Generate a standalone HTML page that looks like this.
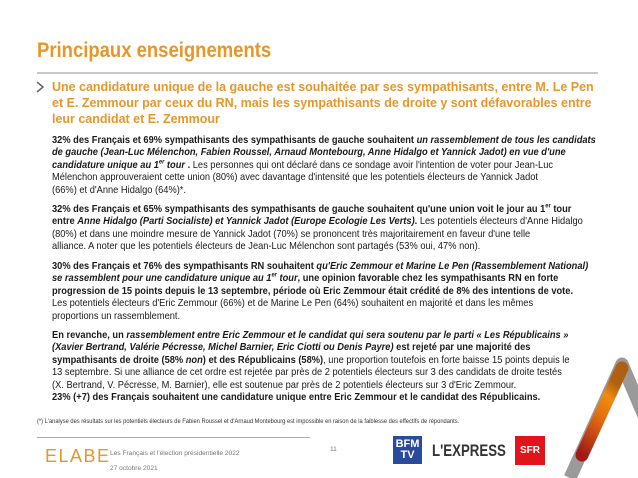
<!DOCTYPE html>
<html><head><meta charset="utf-8"><style>
body{margin:0;width:638px;height:478px;background:#fff;position:relative;overflow:hidden;font-family:"Liberation Sans",sans-serif}
.abs{position:absolute;white-space:nowrap}
.sq{transform-origin:0 0}
.title{left:37px;top:39px;font-size:21px;font-weight:bold;color:#E8962A;transform:scaleX(0.88)}
.rule{left:37px;top:72px;width:561px;height:2px;background:#c8c8c8}
.head{left:52px;top:79px;font-size:13px;line-height:16px;font-weight:bold;color:#E8962A;transform:scaleX(0.96)}
.body{left:52px;font-size:10.5px;line-height:12.4px;color:#1a1a1a;transform:scaleX(0.885)}
sup{font-size:6.5px;line-height:0}
</style></head><body>
<div class="abs sq title">Principaux enseignements</div>
<div class="abs rule"></div>
<svg class="abs" style="left:34px;top:80px" width="12" height="14"><path d="M3 2 L9 7 L3 12" fill="none" stroke="#666" stroke-width="1.5"/></svg>
<div class="abs sq head">Une candidature unique de la gauche est souhaitée par ses sympathisants, entre M. Le Pen<br>et E. Zemmour par ceux du RN, mais les sympathisants de droite y sont défavorables entre<br>leur candidat et E. Zemmour</div>

<div class="abs sq body" style="top:134px"><b>32% des Français et 69% sympathisants des sympathisants de gauche souhaitent <i>un rassemblement de tous les candidats</i></b><br><b><i>de gauche (Jean-Luc Mélenchon, Fabien Roussel, Arnaud Montebourg, Anne Hidalgo et Yannick Jadot) en vue d'une</i></b><br><b><i>candidature unique au 1<sup>er</sup> tour</i> .</b> Les personnes qui ont déclaré dans ce sondage avoir l'intention de voter pour Jean-Luc<br>Mélenchon approuveraient cette union (80%) avec davantage d'intensité que les potentiels électeurs de Yannick Jadot<br>(66%) et d'Anne Hidalgo (64%)*.</div>

<div class="abs sq body" style="top:203px"><b>32% des Français et 65% sympathisants des sympathisants de gauche souhaitent qu'une union voit le jour au 1<sup>er</sup> tour</b><br><b>entre <i>Anne Hidalgo (Parti Socialiste) et Yannick Jadot (Europe Ecologie Les Verts)</i>.</b> Les potentiels électeurs d'Anne Hidalgo<br>(80%) et dans une moindre mesure de Yannick Jadot (70%) se prononcent très majoritairement en faveur d'une telle<br>alliance. A noter que les potentiels électeurs de Jean-Luc Mélenchon sont partagés (53% oui, 47% non).</div>

<div class="abs sq body" style="top:260px"><b>30% des Français et 76% des sympathisants RN souhaitent <i>qu'Eric Zemmour et Marine Le Pen (Rassemblement National)</i></b><br><b><i>se rassemblent pour une candidature unique au 1<sup>er</sup> tour</i>, une opinion favorable chez les sympathisants RN en forte</b><br><b>progression de 15 points depuis le 13 septembre, période où Eric Zemmour était crédité de 8% des intentions de vote.</b><br>Les potentiels électeurs d'Eric Zemmour (66%) et de Marine Le Pen (64%) souhaitent en majorité et dans les mêmes<br>proportions un rassemblement.</div>

<div class="abs sq body" style="top:329px"><b>En revanche, un <i>rassemblement entre Eric Zemmour et le candidat qui sera soutenu par le parti « Les Républicains »</i></b><br><b><i>(Xavier Bertrand, Valérie Pécresse, Michel Barnier, Eric Ciotti ou Denis Payre)</i> est rejeté par une majorité des</b><br><b>sympathisants de droite (58% <i>non</i>) et des Républicains (58%)</b>, une proportion toutefois en forte baisse 15 points depuis le<br>13 septembre. Si une alliance de cet ordre est rejetée par près de 2 potentiels électeurs sur 3 des candidats de droite testés<br>(X. Bertrand, V. Pécresse, M. Barnier), elle est soutenue par près de 2 potentiels électeurs sur 3 d'Eric Zemmour.<br><b>23% (+7) des Français souhaitent une candidature unique entre Eric Zemmour et le candidat des Républicains.</b></div>

<div class="abs sq" style="left:37px;top:418px;font-size:6.4px;color:#333;transform:scaleX(0.9)">(*) L'analyse des résultats sur les potentiels électeurs de Fabien Roussel et d'Arnaud Montebourg est impossible en raison de la faiblesse des effectifs de répondants.</div>
<div class="abs" style="left:37px;top:437px;width:273px;height:1px;background:#aaa"></div>
<div class="abs" style="left:45px;top:446px;font-size:18px;color:#E8962A;letter-spacing:1.5px">ELABE</div>
<div class="abs" style="left:110px;top:446px;font-size:6.6px;color:#777;line-height:15px">Les Français et l'élection présidentielle 2022<br>27 octobre 2021</div>
<div class="abs" style="left:330px;top:446px;font-size:6.6px;color:#777">11</div>

<svg class="abs" style="left:540px;top:340px" width="98" height="138">
<path d="M30 138 L82 24 L110 90" fill="none" stroke="#9a9a9a" stroke-width="13" stroke-linejoin="round"/>
<defs><linearGradient id="g" x1="0" y1="1" x2="0.4" y2="0"><stop offset="0" stop-color="#a01818"/><stop offset="0.5" stop-color="#e06a10"/><stop offset="0.8" stop-color="#f08c10"/><stop offset="1" stop-color="#b06010"/></linearGradient></defs>
<path d="M42 115 L82 28" fill="none" stroke="url(#g)" stroke-width="13" stroke-linecap="round"/>
</svg>

<div class="abs" style="left:393px;top:436px;width:29px;height:28px;background:#2a4a9a;color:#fff;font-weight:bold;font-size:11px;line-height:11px;text-align:center;padding-top:3px;box-sizing:border-box">BFM<br>TV</div>
<div class="abs sq" style="left:432px;top:441px;font-size:17px;font-weight:bold;color:#333;transform:scaleX(0.78)">L'EXPRESS</div>
<div class="abs" style="left:515px;top:436px;width:30px;height:29px;background:#e2141b;color:#fff;font-weight:bold;font-size:10px;line-height:29px;text-align:center">SFR</div>
</body></html>
